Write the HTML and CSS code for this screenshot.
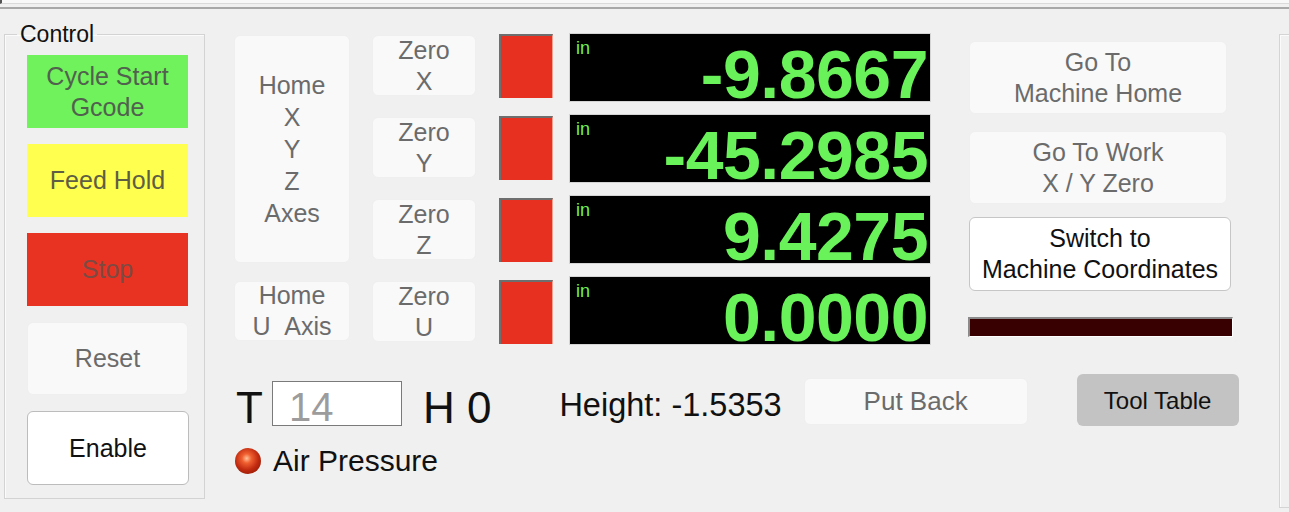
FILE: index.html
```html
<!DOCTYPE html>
<html lang="en">
<head>
    <meta charset="UTF-8">
    <title>Control</title>
    <link rel="stylesheet" href="styles.css">
</head>
<body>
    <div class="topbar"><div class="strip"></div><div class="rule"></div></div>
    <div class="main">
        <fieldset class="control">
            <legend>Control</legend>
            <div class="btn big green">Cycle Start<br>Gcode</div>
            <div class="btn big yellow">Feed Hold</div>
            <div class="btn big red">Stop</div>
            <div class="btn big off">Reset</div>
            <div class="btn big enable">Enable</div>
        </fieldset>

        <div class="center">
            <div class="axes">
                <div class="col home-col">
                    <div class="btn off home-xyz">Home<br>X<br>Y<br>Z<br>Axes</div>
                    <div class="btn off home-u">Home<br>U&nbsp;&nbsp;Axis</div>
                </div>
                <div class="col zero-col">
                    <div class="btn off zero">Zero<br>X</div>
                    <div class="btn off zero">Zero<br>Y</div>
                    <div class="btn off zero">Zero<br>Z</div>
                    <div class="btn off zero">Zero<br>U</div>
                </div>
                <div class="col led-col">
                    <div class="led"></div>
                    <div class="led"></div>
                    <div class="led"></div>
                    <div class="led"></div>
                </div>
                <div class="col dro-col">
                    <div class="dro"><span class="unit">in</span><span class="val">-9.8667</span></div>
                    <div class="dro"><span class="unit">in</span><span class="val">-45.2985</span></div>
                    <div class="dro"><span class="unit">in</span><span class="val">9.4275</span></div>
                    <div class="dro"><span class="unit">in</span><span class="val">0.0000</span></div>
                </div>
                <div class="col goto-col">
                    <div class="btn off goto">Go To<br>Machine Home</div>
                    <div class="btn off goto">Go To Work<br>X / Y Zero</div>
                    <div class="btn switch">Switch to<br>Machine Coordinates</div>
                    <div class="status-bar"></div>
                </div>
            </div>

            <div class="toolrow">
                <span class="big-label">T</span>
                <div class="tool-input">14</div>
                <span class="big-label h0">H 0</span>
                <span class="height">Height: -1.5353</span>
                <div class="btn off putback">Put Back</div>
                <div class="btn tooltable">Tool Table</div>
            </div>

            <div class="airrow">
                <div class="air-led"></div>
                <span>Air Pressure</span>
            </div>
        </div>

        <div class="side"></div>
    </div>
</body>
</html>
```

FILE: styles.css
```css
body { margin: 0; background: #f0f0f0; font-family: "Liberation Sans", Arial, sans-serif; overflow: hidden; height: 512px; }

.topbar { height: 10px; }
.topbar .strip { height: 4px; background: #f8f8f8; border-bottom: 1px solid #dadada; border-left: 2px solid #555; box-sizing: border-box; }
.topbar .rule { margin-top: 3px; height: 2px; background: #a8a8a8; }

.main { display: flex; align-items: flex-start; padding-left: 4px; margin-top: 12px; }

/* control group */
.control {
    margin: 0;
    width: 201px;
    box-sizing: border-box;
    padding: 9px 15px 13px 22px;
    border: 1px solid #d3d3d3;
    box-shadow: inset 1px 1px 0 #fbfbfb;
    display: flex;
    flex-direction: column;
    gap: 16px;
    flex-shrink: 0;
}
.control legend { font-size: 23px; line-height: 24px; padding: 0 3px; margin-left: -10px; color: #111; }

.btn {
    display: flex;
    align-items: center;
    justify-content: center;
    text-align: center;
    box-sizing: border-box;
    font-size: 25px;
    line-height: 31px;
    color: #6b6b6b;
    flex-shrink: 0;
}
.btn.big { width: 161px; height: 73px; }
.green { background: #6ff25b; color: #52604f; }
.yellow { background: #ffff50; color: #5e5e44; }
.red { background: #e83322; color: #7c4a42; }
.off { background: #f9f9f9; border: 1px solid #efefef; border-radius: 6px; }
.btn.big.enable { background: #fff; border: 1px solid #bcbcbc; border-radius: 6px; color: #111; height: 74px; width: 162px; }

/* axes area */
.center { margin-left: 29px; margin-top: 11px; flex-shrink: 0; }
.axes { display: flex; align-items: flex-start; }
.col { display: flex; flex-direction: column; flex-shrink: 0; }

.home-col { width: 116px; margin-top: 2px; gap: 18px; }
.home-xyz { height: 228px; line-height: 32px; }
.home-u { height: 60px; }

.zero-col { width: 104px; margin-left: 22px; margin-top: 2px; gap: 21px; }
.zero { height: 61px; }

.led-col { margin-left: 23px; margin-top: 1px; gap: 18px; }
.led {
    width: 54px;
    height: 64px;
    box-sizing: border-box;
    background: #e83020;
    border-top: 2px solid #6e6e6e;
    border-left: 2px solid #6e6e6e;
    border-right: 1px solid #f3a090;
}

.dro-col { margin-left: 16px; width: 362px; gap: 12px; }
.dro {
    position: relative;
    height: 69px;
    box-sizing: border-box;
    background: #000;
    border: 1px solid #d4d4d4;
    display: flex;
    align-items: flex-end;
    justify-content: flex-end;
    padding-right: 2px;
}
.dro .unit { position: absolute; left: 6px; top: 4px; font-size: 18px; line-height: 20px; color: #6af25a; }
.dro .val { font-size: 68px; line-height: 54px; font-weight: bold; color: #6af25a; letter-spacing: -0.5px; }

.goto-col { margin-left: 38px; margin-top: 8px; width: 265px; }
.goto { width: 258px; height: 73px; margin-bottom: 17px; }
.switch { width: 262px; height: 74px; background: #fff; border: 1px solid #c6c6c6; border-radius: 6px; color: #111; margin-top: -4px; }
.status-bar {
    margin-top: 26px;
    margin-left: -1px;
    width: 265px;
    height: 20px;
    box-sizing: border-box;
    background: #380000;
    border-top: 2px solid #8a8a8a;
    border-left: 2px solid #8a8a8a;
    border-bottom: 1px solid #fff;
    border-right: 1px solid #fff;
}

/* tool row */
.toolrow { display: flex; align-items: flex-end; height: 52px; margin-top: 29px; }
.big-label { font-size: 44px; line-height: 36px; color: #111; margin-left: 2px; }
.tool-input {
    margin-left: 9px;
    width: 130px;
    height: 45px;
    box-sizing: border-box;
    background: #fff;
    border: 1px solid #7a7a7a;
    color: #9c9c9c;
    font-size: 40px;
    line-height: 50px;
    padding-left: 16px;
}
.h0 { margin-left: 21px; }
.height { margin-left: 68px; margin-bottom: 5px; font-size: 32.5px; line-height: 32px; color: #111; }
.putback { margin-left: 22px; margin-bottom: 1px; width: 224px; height: 47px; font-size: 26px; }
.tooltable { margin-left: 49px; width: 162px; height: 52px; background: #c3c3c3; border-radius: 6px; color: #111; font-size: 24px; }

.airrow { display: flex; align-items: center; margin-top: 22px; height: 26px; font-size: 30px; color: #111; }
.air-led {
    width: 26px;
    height: 26px;
    border-radius: 50%;
    margin-left: 1px;
    margin-right: 12px;
    background: radial-gradient(circle at 45% 40%, #ffc29a 0, #f06030 22%, #c02a10 55%, #7a1200 100%);
}

.side {
    margin-left: 40px;
    margin-top: 12px;
    width: 40px;
    height: 472px;
    flex-shrink: 0;
    border: 1px solid #d4d4d4;
    border-right: none;
    box-shadow: inset 1px 1px 0 #fbfbfb;
}
```
